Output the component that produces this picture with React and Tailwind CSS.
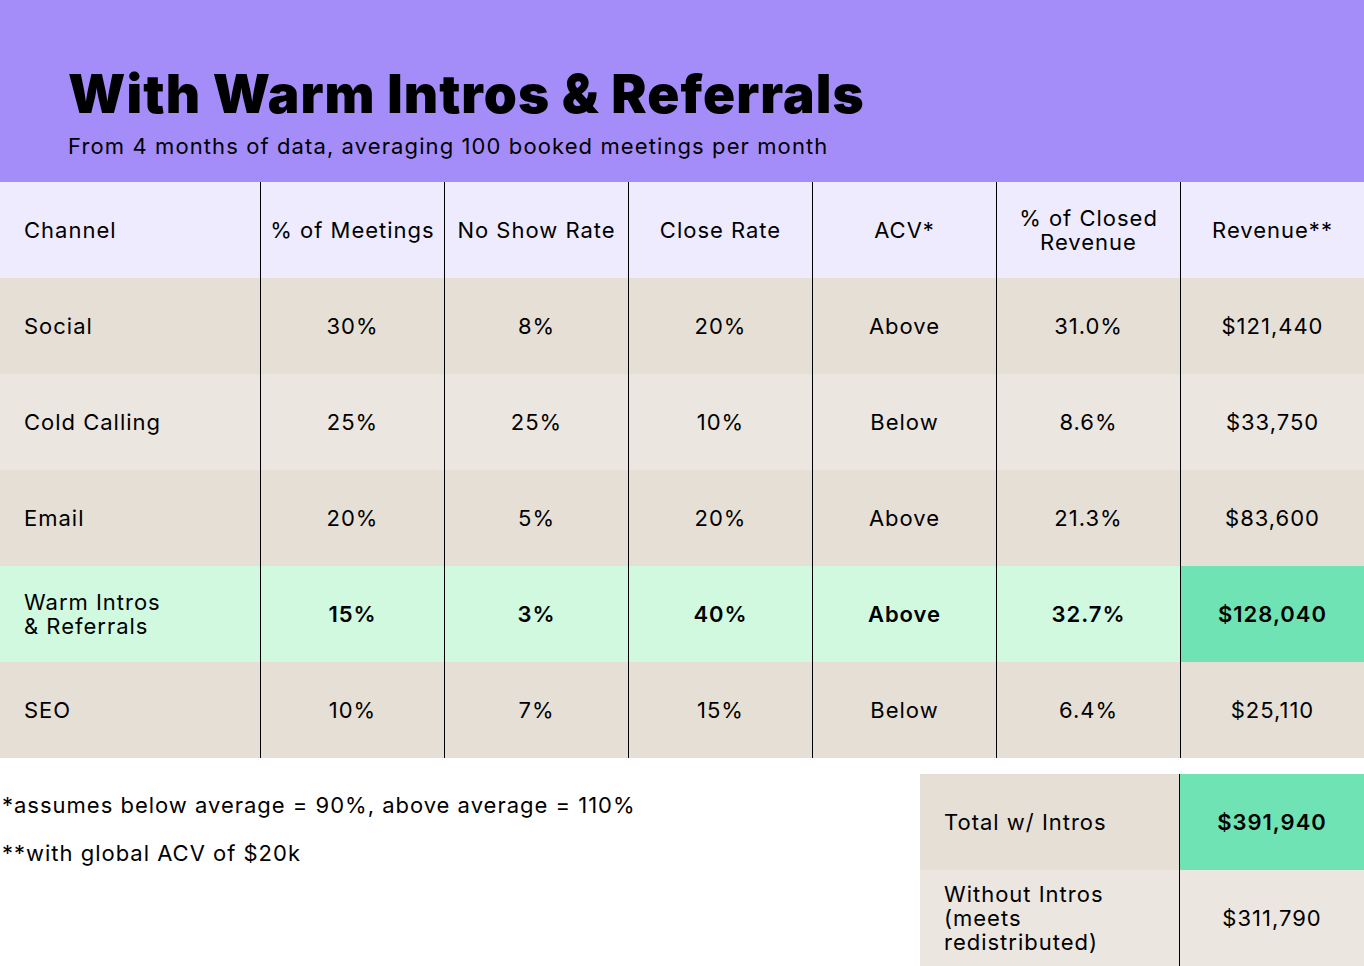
const rows = [
  { name: "Social", vals: ["30%", "8%", "20%", "Above", "31.0%", "$121,440"], bg: "bg-[#e6dfd6]" },
  { name: "Cold Calling", vals: ["25%", "25%", "10%", "Below", "8.6%", "$33,750"], bg: "bg-[#ebe6df]" },
  { name: "Email", vals: ["20%", "5%", "20%", "Above", "21.3%", "$83,600"], bg: "bg-[#e6dfd6]" },
  { name: "Warm Intros\n& Referrals", vals: ["15%", "3%", "40%", "Above", "32.7%", "$128,040"], bg: "bg-[#d1f9e0]", hi: true },
  { name: "SEO", vals: ["10%", "7%", "15%", "Below", "6.4%", "$25,110"], bg: "bg-[#e6dfd6]" },
];

const heads = ["% of Meetings", "No Show Rate", "Close Rate", "ACV*", "% of Closed\nRevenue", "Revenue**"];

function Row({ row }) {
  return (
    <div className="grid h-[96px] grid-cols-[260px_repeat(6,184px)]">
      <div className={`flex items-center whitespace-pre-line pl-6 leading-[24px] ${row.bg}`}>{row.name}</div>
      {row.vals.map((v, i) => (
        <div
          key={i}
          className={`flex items-center justify-center border-l border-black ${
            row.hi && i === 5 ? "bg-[#6fe3b3]" : row.bg
          } ${row.hi ? "font-semibold" : ""}`}
        >
          {v}
        </div>
      ))}
    </div>
  );
}

export default function App() {
  return (
    <div className="w-[1364px] h-[966px] overflow-hidden bg-white text-[22px] tracking-[0.045em] text-black" style={{ fontFamily: "Inter, 'Noto Sans', sans-serif" }}>
      <header className="flex h-[182px] flex-col bg-[#a48cf9] pl-[68px] pt-[62px]">
        <h1 className="text-[53px] font-black leading-[64px] tracking-[0.02em]">With Warm Intros &amp; Referrals</h1>
        <p className="mt-[5px] text-[22px] leading-[30px] tracking-[0.05em]">From 4 months of data, averaging 100 booked meetings per month</p>
      </header>

      <div className="grid h-[96px] grid-cols-[260px_repeat(6,184px)] bg-[#eeebfe]">
        <div className="flex items-center pl-6">Channel</div>
        {heads.map((h) => (
          <div key={h} className="flex items-center justify-center whitespace-pre-line border-l border-black text-center leading-[24px]">
            {h}
          </div>
        ))}
      </div>

      {rows.map((r) => (
        <Row key={r.name} row={r} />
      ))}

      <div className="mt-4 flex">
        <div className="flex flex-1 flex-col gap-[18px] pl-[2px] pt-[16px] leading-[30px]">
          <p>*assumes below average = 90%, above average = 110%</p>
          <p>**with global ACV of $20k</p>
        </div>
        <div className="grid w-[444px] grid-cols-[259px_185px]">
          <div className="flex h-[96px] items-center bg-[#e6dfd6] pl-6">Total w/ Intros</div>
          <div className="flex h-[96px] items-center justify-center border-l border-black bg-[#6fe3b3] font-semibold">$391,940</div>
          <div className="flex h-[96px] items-center bg-[#ebe6df] pl-6 leading-[24px]">
            Without Intros
            <br />
            (meets
            <br />
            redistributed)
          </div>
          <div className="flex h-[96px] items-center justify-center border-l border-black bg-[#ebe6df]">$311,790</div>
        </div>
      </div>
    </div>
  );
}
